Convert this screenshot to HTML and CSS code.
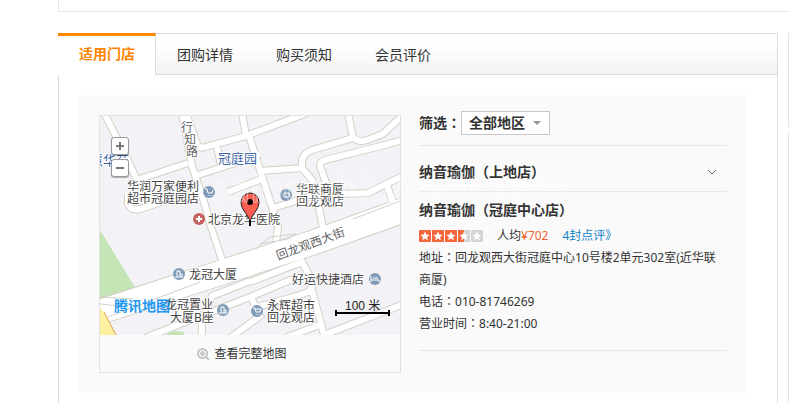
FILE: index.html
```
<!DOCTYPE html>
<html lang="zh-CN">

<head>
    <meta charset="UTF-8">
    <meta name="viewport" content="width=device-width, initial-scale=1.0">
    <title>适用门店</title>
    <link rel="stylesheet" href="styles.css">
</head>

<body>
    <div class="page">
        <div class="prev-card"></div>

        <div class="columns">
            <main class="card">
                <nav class="tabs">
                    <a class="tab active" href="#shops">适用门店</a>
                    <a class="tab" href="#detail">团购详情</a>
                    <a class="tab" href="#notice">购买须知</a>
                    <a class="tab" href="#review">会员评价</a>
                </nav>

                <section class="panel" id="shops">
                    <div class="map-box">
                        <div class="map">
                            <svg class="map-img" viewBox="0 0 300 219" preserveAspectRatio="xMidYMid slice">
                                <defs>
                                    <g id="streets">
                                        <path d="M4 -3L22 32L37 64"/>
                                        <path d="M37 64L88 47"/>
                                        <path d="M82 -3L92 50L105 89L110 108L124 150"/>
                                        <path d="M86 -3L97 28Q99 33 105 31L146 20L142 -3"/>
                                        <path d="M117 31L122 53"/>
                                        <path d="M95 60L135 47L160 38"/>
                                        <path d="M146 20L207 -3"/>
                                        <path d="M148 16L160 54L173 94L178 112L176 126"/>
                                        <path d="M128 76L162 63M160 55L202 52L212 64L218 86L224 118"/>
                                        <path d="M202 53V44Q203 38 212 34L253 22L248 -3"/>
                                        <path d="M253 21Q258 27 267 24L283 18L303 -1"/>
                                        <path d="M303 24L277 31L225 44Q218 46 221 53L231 80"/>
                                        <path d="M173 92L215 79L268 77L303 60"/>
                                        <path d="M287 69L294 90"/>
                                        <path d="M28 78L28 88Q31 95 40 93L74 82"/>
                                        <path d="M45 222L98 201L150 181L200 160M98 200Q104 206 101 222M104 199L112 180L150 165"/>
                                        <path d="M150 166L202 146L212 164Q214 171 208 176L190 182L150 193"/>
                                        <path d="M212 174L224 219L304 188M150 179L160 200L130 222M185 222L222 208"/>
                                    </g>
                                </defs>
                                <rect class="land" width="300" height="219"/>
                                <path class="park" d="M0 114L39 178L0 190ZM66 219Q72 213 84 216V219Z"/>
                                <use href="#streets" class="road-edge"/>
                                <path class="main-edge" d="M-10 199L120 157L212 127L310 92"/>
                                <use href="#streets" class="road"/>
                                <path class="main-road" d="M-10 199L120 157L212 127L310 92"/>
                                <path class="lane" d="M300 85L253 103M0 181L33 183M0 188L20 190M160 128L188 123L196 118L170 121Q160 128 156 133M8 201L100 166"/>
                                <path class="yellow" d="M0 192L5 197L16 219H0Z"/>
                                <path class="yellow-line" d="M4 196L16 219"/>

                                <g class="area-name">
                                    <text x="-10" y="49">慧华苑</text>
                                    <text x="118" y="47">冠庭园</text>
                                </g>
                                <g class="street-name">
                                    <text x="81" y="16">行</text>
                                    <text x="84" y="28">知</text>
                                    <text x="86" y="40">路</text>
                                    <text x="178" y="144" transform="rotate(-20 178 144)">回龙观西大街</text>
                                </g>
                                <g class="place-name">
                                    <text x="27" y="75">华润万家便利</text>
                                    <text x="27" y="87">超市冠庭园店</text>
                                    <text x="108" y="108">北京龙华医院</text>
                                    <text x="89" y="163">龙冠大厦</text>
                                    <text x="65" y="193">龙冠置业</text>
                                    <text x="70" y="206">大厦B座</text>
                                    <text x="196" y="78">华联商厦</text>
                                    <text x="196" y="90">回龙观店</text>
                                    <text x="192" y="168">好运快捷酒店</text>
                                    <text x="167" y="194">永辉超市</text>
                                    <text x="167" y="206">回龙观店</text>
                                </g>

                                <g class="poi">
                                    <circle cx="109" cy="76" r="6"/>
                                    <path d="M105 73H107L108 77H112L113 74M109 79V80M112 79V80"/>
                                    <circle cx="186" cy="79" r="6"/>
                                    <path d="M184 77H189V81H184ZM189 78H190"/>
                                    <circle cx="79" cy="158" r="6"/>
                                    <path d="M77 161V155H80V161M80 158H82V161M75 161H83"/>
                                    <circle cx="123" cy="194" r="6"/>
                                    <path d="M121 197V191H124V197M124 194H126V197M119 197H127"/>
                                    <circle cx="157" cy="195" r="6"/>
                                    <path d="M153 192H155L156 196H160L161 193H155M157 198V199M160 198V199"/>
                                    <circle cx="275" cy="163" r="6"/>
                                    <path d="M271 160V166M271 164H279V166M273 162H278"/>
                                </g>
                                <circle class="hospital" cx="99" cy="103" r="6"/>
                                <path class="hospital-cross" d="M99 100V106M96 103H102"/>

                                <text class="map-brand" x="14" y="195">腾讯地图</text>

                                <text class="scale-text" x="245" y="194">100 米</text>
                                <path class="scale-bar" d="M236 194V200M289 194V200M236 197H289"/>

                                <path class="pin" d="M150 106C149 99 141 94 141 86A9 9 0 0 1 159 86C159 94 151 99 150 106Z"/>
                                <path class="pin-tip" d="M150 104V110"/>
                                <circle cx="150" cy="86" r="3"/>
                            </svg>
                            <div class="zoom-bar">
                                <button type="button" class="zoom-btn" aria-label="放大">
                                    <svg viewBox="0 0 10 10"><path d="M1 5H9M5 1V9"/></svg>
                                </button>
                                <button type="button" class="zoom-btn" aria-label="缩小">
                                    <svg viewBox="0 0 10 10"><path d="M1 5H9"/></svg>
                                </button>
                            </div>
                        </div>
                        <a class="full-map" href="#map">
                            <svg viewBox="0 0 13 13"><circle cx="5.5" cy="5.5" r="4.5"/><path d="M3 5.5H8M5.5 3V8M9 9L12 12"/></svg>
                            <span>查看完整地图</span>
                        </a>
                    </div>

                    <div class="shops">
                        <div class="filter">
                            <label for="area">筛选<span class="colon" lang="zh-TW">：</span></label>
                            <div class="select-wrap">
                                <select id="area">
                                    <option>全部地区</option>
                                </select>
                            </div>
                        </div>

                        <div class="shop closed">
                            <h3>纳音瑜伽（上地店）</h3>
                            <svg class="arrow" viewBox="0 0 10 6"><path d="M1 1L5 5L9 1"/></svg>
                        </div>

                        <div class="shop open">
                            <h3>纳音瑜伽（冠庭中心店）</h3>
                            <div class="meta">
                                <svg class="stars" viewBox="0 0 64 12">
                                    <defs>
                                        <path id="star" d="M6 1.5L7.3 4.6L10.5 4.9L8.1 7L8.8 10.2L6 8.5L3.2 10.2L3.9 7L1.5 4.9L4.7 4.6Z"/>
                                    </defs>
                                    <g class="star-on">
                                        <rect width="12" height="12" rx="1"/>
                                        <rect x="13" width="12" height="12" rx="1"/>
                                        <rect x="26" width="12" height="12" rx="1"/>
                                        <rect x="39" width="6" height="12"/>
                                    </g>
                                    <g class="star-off">
                                        <rect x="45" width="6" height="12"/>
                                        <rect x="52" width="12" height="12" rx="1"/>
                                    </g>
                                    <g class="star-shape">
                                        <use href="#star"/>
                                        <use href="#star" x="13"/>
                                        <use href="#star" x="26"/>
                                        <use href="#star" x="39"/>
                                        <use href="#star" x="52"/>
                                    </g>
                                </svg>
                                <span>人均<em>¥702</em></span>
                                <a href="#review">4封点评》</a>
                            </div>
                            <p>地址<span class="colon" lang="zh-TW">：</span>回龙观西大街冠庭中心10号楼2单元302室(近华联商厦)</p>
                            <p>电话<span class="colon" lang="zh-TW">：</span>010-81746269</p>
                            <p>营业时间<span class="colon" lang="zh-TW">：</span>8:40-21:00</p>
                        </div>
                    </div>

                    <div class="watermark">saloos.hlumeijt.com</div>
                </section>
            </main>

            <aside class="side">
                <div class="side-top"></div>
                <div class="side-rest"></div>
            </aside>
        </div>
    </div>
</body>

</html>
```
FILE: styles.css
```
* {
    box-sizing: border-box;
    margin: 0;
    padding: 0;
}

body {
    background: #fff;
    color: #333;
    font-family: "Noto Sans", "Noto Sans CJK SC", sans-serif;
    font-size: 12px;
    line-height: 22px;
}

a {
    text-decoration: none;
}

.page {
    display: flex;
    flex-direction: column;
    height: 100vh;
    padding-left: 58px;
    overflow: hidden;
}

.prev-card {
    flex: none;
    height: 12px;
    border-left: 1px solid #e5e5e5;
    border-bottom: 1px solid #e5e5e5;
}

.columns {
    flex: 1;
    display: flex;
    gap: 10px;
    padding-top: 21px;
}

.card {
    flex: 1;
    border: 1px solid #dcdcdc;
    border-top: none;
    border-bottom: none;
}

/* tabs */
.tabs {
    display: flex;
    height: 42px;
    border-top: 1px solid #dcdcdc;
    border-bottom: 1px solid #dcdcdc;
    background: linear-gradient(#fff, #fff 25%, #f3f3f3);
}

.tab {
    margin-right: 1px;
    padding: 0 21px;
    font-size: 14px;
    line-height: 42px;
    color: #333;
}

.tab.active {
    margin: -1px 0 -1px -1px;
    padding: 0 20px 0 21px;
    border-top: 3px solid #ff8400;
    border-right: 1px solid #dcdcdc;
    background: #fff;
    line-height: 36px;
    font-weight: bold;
    color: #ff8400;
}

.panel {
    position: relative;
    display: flex;
    align-items: flex-start;
    gap: 18px;
    margin: 20px 30px 0 20px;
    padding: 16px 20px 20px;
    background: #fafafa;
}

/* map */
.map-box {
    flex: none;
    width: 302px;
    margin-top: 4px;
    border: 1px solid #e2e2e2;
}

.map {
    position: relative;
}

.map-img {
    display: block;
    width: 100%;
}

.land {
    fill: #f3f3f7;
}

.park {
    fill: #c4e5b5;
}

.road-edge, .road, .main-edge, .main-road, .lane, .yellow-line {
    fill: none;
}

.road-edge {
    stroke: #d3d0c6;
    stroke-width: 8px;
}

.road {
    stroke: #fff;
    stroke-width: 6px;
}

.main-edge {
    stroke: #d3d0c6;
    stroke-width: 26px;
}

.main-road {
    stroke: #fff;
    stroke-width: 24px;
}

.lane {
    stroke: #d3d0c6;
}

.yellow {
    fill: #fdf0a0;
}

.yellow-line {
    stroke: #dca05a;
}

.area-name, .street-name, .place-name {
    font-size: 12px;
    paint-order: stroke;
    stroke: #fff;
    stroke-width: 2px;
}

.area-name {
    font-size: 13px;
    fill: #3f67a5;
}

.street-name {
    fill: #666;
}

.place-name {
    fill: #444;
}

.poi circle {
    fill: #819cb8;
}

.poi path {
    fill: none;
    stroke: #fff;
}

.hospital {
    fill: #c66262;
}

.hospital-cross {
    stroke: #fff;
    stroke-width: 2px;
}

.map-brand {
    font-size: 14px;
    font-weight: bold;
    fill: #2196f3;
}

.scale-text {
    font-family: "Liberation Sans", "Noto Sans CJK SC", sans-serif;
    font-size: 12px;
    fill: #222;
}

.scale-bar {
    stroke: #000;
    stroke-width: 2px;
}

.pin {
    fill: #fb5f52;
    stroke: #222;
}

.pin-tip {
    stroke: #000;
    stroke-width: 2px;
}

.zoom-bar {
    position: absolute;
    top: 21px;
    left: 11px;
    display: grid;
    gap: 4px;
}

.zoom-btn {
    display: flex;
    align-items: center;
    justify-content: center;
    width: 18px;
    height: 18px;
    border: 1px solid #999;
    border-radius: 3px;
    background: #fff;
    box-shadow: 0 1px 1px rgba(0, 0, 0, 0.3);
    cursor: pointer;
}

.zoom-btn svg {
    width: 10px;
    height: 10px;
    stroke: #777;
    stroke-width: 2px;
}

.full-map {
    display: flex;
    align-items: center;
    justify-content: center;
    gap: 4px;
    padding: 8px 16px 7px 0;
    color: #333;
}

.full-map svg {
    width: 13px;
    height: 13px;
    fill: none;
    stroke: #c4c4c4;
    stroke-width: 2px;
}

/* shop list */
.shops {
    flex: 1;
}

/* colon sits in the middle of its box */
.colon {
    font-family: "Noto Sans CJK TC", sans-serif;
    line-height: 1;
}

.filter {
    display: flex;
    align-items: center;
    padding-bottom: 10px;
    border-bottom: 1px solid #e8e8e8;
    font-size: 14px;
    font-weight: bold;
}

.select-wrap {
    position: relative;
}

.select-wrap::after {
    content: "";
    position: absolute;
    top: 10px;
    right: 9px;
    border: 4px solid transparent;
    border-top-color: #999;
    border-bottom: none;
    pointer-events: none;
}

.filter select {
    display: block;
    height: 24px;
    padding: 0 24px 0 7px;
    border: 1px solid #c8c8c8;
    border-radius: 0;
    background: #fff;
    color: #333;
    font: inherit;
    appearance: none;
}

.shop {
    border-bottom: 1px solid #e8e8e8;
}

.shop h3 {
    font-size: 14px;
    line-height: 22px;
}

.closed {
    display: flex;
    align-items: center;
    justify-content: space-between;
    padding: 15px 10px 8px 0;
}

.arrow {
    width: 10px;
    height: 6px;
    fill: none;
    stroke: #666;
}

.open {
    padding: 7px 0 15px;
}

.meta {
    display: flex;
    align-items: center;
    gap: 14px;
    padding-top: 4px;
}

.meta em {
    font-style: normal;
    color: #f26531;
}

.meta a {
    color: #1282c6;
}

.stars {
    width: 64px;
    height: 12px;
}

.star-on {
    fill: #f5663f;
}

.star-off {
    fill: #d5d5d5;
}

.star-shape {
    fill: #fff;
}

.watermark {
    position: absolute;
    top: 68px;
    left: 132px;
    font-size: 38px;
    line-height: 48px;
    color: transparent;
    -webkit-text-stroke: 1px rgba(255, 255, 255, 0.5);
    pointer-events: none;
}

/* right column, only its edge is inside the window */
.side {
    flex: none;
    display: flex;
    flex-direction: column;
    gap: 5px;
    width: 1px;
}

.side-top {
    height: 94px;
    border-left: 1px solid #e5e5e5;
}

.side-rest {
    flex: 1;
    border-left: 1px solid #e5e5e5;
}
```
